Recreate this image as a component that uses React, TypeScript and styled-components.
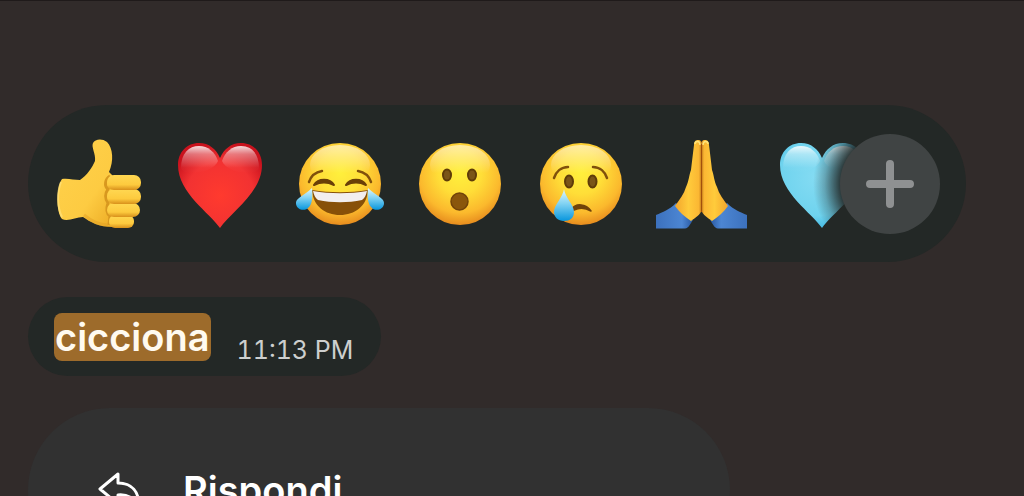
import React from "react";
import styled, { createGlobalStyle } from "styled-components";

const GlobalStyle = createGlobalStyle`
  *, *::before, *::after { box-sizing: border-box; }
  body {
    margin: 0;
    background: #312b2a;
    color: #fff;
    font-family: Inter, "Liberation Sans", sans-serif;
  }
  button { font: inherit; color: inherit; border: 0; padding: 0; background: none; cursor: pointer; }
`;

const Screen = styled.main`
  display: flex;
  flex-direction: column;
  align-items: flex-start;
  height: 100vh;
  overflow: hidden;
  padding: 104px 58px 0 28px;
  border-top: 1px solid #1f1a1a;
`;

const ReactionBar = styled.div`
  position: relative;
  flex: none;
  width: 100%;
  padding: 31px 84px 30px 11px;
  border-radius: 80px;
  background: #232826;
`;

const ReactionList = styled.div`
  display: grid;
  grid-template-columns: repeat(7, 1fr);
  justify-items: center;
`;

const ReactionButton = styled.button`
  display: block;
  height: 96px;
  svg { display: block; overflow: visible; }
`;

const AddButton = styled.button`
  position: absolute;
  top: 29px;
  right: 26px;
  display: grid;
  place-items: center;
  width: 100px;
  height: 100px;
  border-radius: 50%;
  background: #404444;
`;

const Bubble = styled.div`
  display: flex;
  flex: none;
  align-items: flex-end;
  gap: 26px;
  margin-top: 35px;
  padding: 16px 28px 15px 26px;
  border-radius: 40px;
  background: #232826;
`;

const Highlight = styled.mark`
  padding: 0 1px;
  border-radius: 8px;
  background: #9d6b2b;
  color: #fffaf0;
  font-size: 38px;
  font-weight: 600;
  line-height: 48px;
`;

const Time = styled.time`
  color: #cdcfce;
  font-size: 25px;
  font-variant-numeric: tabular-nums;
  line-height: 22px;
`;

const Menu = styled.div`
  flex: none;
  width: 100%;
  max-width: 702px;
  margin-top: 32px;
  padding: 48px 0;
  border-radius: 92px;
  background: #313131;
`;

const MenuItem = styled.button`
  display: flex;
  align-items: center;
  gap: 41px;
  width: 100%;
  padding: 10px 70px;
  font-size: 38px;
  font-weight: 600;
  line-height: 48px;
  text-align: left;
`;

const Defs = () => (
  <svg width="0" height="0" style={{ position: "absolute" }} aria-hidden="true">
    <defs>
      <radialGradient id="face" cx="50%" cy="36%" r="66%">
        <stop offset="0" stopColor="#fff03c" />
        <stop offset=".4" stopColor="#ffde38" />
        <stop offset=".75" stopColor="#fbb92d" />
        <stop offset="1" stopColor="#e4861c" />
      </radialGradient>
      <linearGradient id="shine" x1="0" y1="0" x2="0" y2="1">
        <stop offset="0" stopColor="#fff" stopOpacity=".55" />
        <stop offset=".7" stopColor="#fff" stopOpacity="0" />
      </linearGradient>
      <linearGradient id="skin" x1="0" y1="0" x2="1" y2="1">
        <stop offset="0" stopColor="#ffd24c" />
        <stop offset=".6" stopColor="#fdcb42" />
        <stop offset="1" stopColor="#e9a51f" />
      </linearGradient>
      <linearGradient id="finger" x1="0" y1="0" x2="0" y2="1">
        <stop offset="0" stopColor="#ffd852" />
        <stop offset=".65" stopColor="#fdca3e" />
        <stop offset="1" stopColor="#d8901b" />
      </linearGradient>
      <radialGradient id="red" cx="50%" cy="62%" r="62%">
        <stop offset="0" stopColor="#ff3a2e" />
        <stop offset=".65" stopColor="#f23232" />
        <stop offset="1" stopColor="#c9121d" />
      </radialGradient>
      <radialGradient id="blue" cx="45%" cy="40%" r="65%">
        <stop offset="0" stopColor="#85dcf3" />
        <stop offset=".7" stopColor="#6fd3ee" />
        <stop offset="1" stopColor="#39b4e0" />
      </radialGradient>
      <linearGradient id="gloss" x1="0" y1="0" x2="0" y2="1">
        <stop offset="0" stopColor="#fff" stopOpacity=".85" />
        <stop offset=".3" stopColor="#fff" stopOpacity=".4" />
        <stop offset=".8" stopColor="#fff" stopOpacity=".03" />
        <stop offset="1" stopColor="#fff" stopOpacity="0" />
      </linearGradient>
      <linearGradient id="tear" x1="0" y1="0" x2="0" y2="1">
        <stop offset="0" stopColor="#e3f8fd" />
        <stop offset=".45" stopColor="#83d3f3" />
        <stop offset="1" stopColor="#0796dd" />
      </linearGradient>
      <linearGradient id="palm" x1="0" y1="0" x2="1" y2="0">
        <stop offset="0" stopColor="#f3a52c" />
        <stop offset=".5" stopColor="#ffcb3b" />
        <stop offset=".88" stopColor="#fbb733" />
        <stop offset="1" stopColor="#c47a18" />
      </linearGradient>
      <linearGradient id="sleeve" x1="0" y1="0" x2="1" y2="0">
        <stop offset="0" stopColor="#3c71bd" />
        <stop offset=".7" stopColor="#4c86d3" />
        <stop offset="1" stopColor="#2857a0" />
      </linearGradient>
      <radialGradient id="fade" gradientUnits="userSpaceOnUse" cx="116" cy="48" r="80">
        <stop offset=".63" stopColor="#222" />
        <stop offset=".72" stopColor="#666" />
        <stop offset=".82" stopColor="#b5b5b5" />
        <stop offset=".96" stopColor="#fff" />
      </radialGradient>
      <mask id="fadeMask" maskUnits="userSpaceOnUse" x="0" y="0" width="96" height="96">
        <rect width="96" height="96" fill="url(#fade)" />
      </mask>
    </defs>
  </svg>
);

const Emoji = ({ children }: { children: React.ReactNode }) => (
  <svg width="96" height="96" viewBox="0 0 96 96" fill="none" aria-hidden="true">
    {children}
  </svg>
);

const Face = () => (
  <>
    <circle cx="48" cy="48" r="41" fill="url(#face)" />
    <ellipse cx="48" cy="29" rx="30" ry="20" fill="url(#shine)" />
  </>
);

const ThumbsUp = () => (
  <Emoji>
    <path
      d="M11 43C17 42 23 44 29 44C36 39 41 32 44 25C45 18 40 11 42 7C44 3 51 2 56 6C62 12 63 25 58 36L62 40L70 50V86L62 91C48 91 39 86 32 81C25 81 17 86 11 83C5 76 5 51 11 43Z"
      fill="url(#skin)"
    />
    <path d="M10 46C6 56 6 71 11 81" stroke="#ffe27d" strokeWidth="2" opacity=".7" />
    <path d="M33 79C40 85 48 89 57 89" stroke="#e2a023" strokeWidth="3" opacity=".5" />
    <path d="M59 40C54 43 53 50 57 53C53 59 55 64 57 67C55 73 56 78 59 80L58 89" stroke="#d8981f" strokeWidth="3" />
    <rect x="58" y="79" width="25" height="13" rx="6" fill="url(#finger)" />
    <rect x="56" y="67" width="33" height="14" rx="7" fill="url(#finger)" />
    <rect x="56" y="53" width="34" height="15" rx="7" fill="url(#finger)" />
    <rect x="56" y="39" width="34" height="15" rx="7" fill="url(#finger)" />
  </Emoji>
);

const HEART =
  "M48 92C38 77 6 57 6 29C6 16 15 7 27 7C37 7 44 13 48 22C52 13 59 7 69 7C81 7 90 16 90 29C90 57 58 77 48 92Z";

const Heart = ({ fill }: { fill: string }) => (
  <>
    <path d={HEART} fill={`url(#${fill})`} />
    <path d="M9 32C9 17 17 10 27 10C36 10 43 16 46 25C42 36 12 42 9 32Z" fill="url(#gloss)" />
    <path d="M50 25C53 16 60 10 69 10C79 10 87 17 87 32C84 42 54 36 50 25Z" fill="url(#gloss)" />
  </>
);

const RedHeart = () => (
  <Emoji>
    <Heart fill="red" />
  </Emoji>
);

const BlueHeart = () => (
  <Emoji>
    <g mask="url(#fadeMask)">
      <Heart fill="blue" />
    </g>
  </Emoji>
);

const Laugh = () => (
  <Emoji>
    <Face />
    <path d="M17 46C19 40 24 36 30 35M66 35C72 36 77 40 79 46" stroke="#80500c" strokeWidth="2.5" strokeLinecap="round" />
    <path d="M22 49C26 42 38 42 42 49C36 46 28 46 22 49ZM54 49C58 42 70 42 74 49C68 46 60 46 54 49Z" fill="#6a3f08" stroke="#6a3f08" strokeWidth="2" strokeLinejoin="round" />
    <path d="M20 54C38 57 58 57 76 54C75 70 63 79 48 79C33 79 21 70 20 54Z" fill="#875008" />
    <path d="M21 55C38 58 58 58 75 55C74 59 73 62 70 64C56 67 40 67 26 64C23 62 22 59 21 55Z" fill="#f2eeee" />
    <path d="M20 52C21 61 20 68 17 71C13 76 5 74 4 68C3 62 12 60 20 52Z" fill="url(#tear)" />
    <path d="M76 52C75 61 76 68 79 71C83 76 91 74 92 68C93 62 84 60 76 52Z" fill="url(#tear)" />
  </Emoji>
);

const Wow = () => (
  <Emoji>
    <Face />
    <ellipse cx="35" cy="39" rx="4" ry="5.5" fill="#7a5518" stroke="#5f3c09" strokeWidth="2" />
    <ellipse cx="60" cy="39" rx="4" ry="5.5" fill="#7a5518" stroke="#5f3c09" strokeWidth="2" />
    <circle cx="47.5" cy="65.5" r="8.5" fill="#8a560c" stroke="#71430a" strokeWidth="1.5" />
  </Emoji>
);

const Cry = () => (
  <Emoji>
    <Face />
    <path d="M21 42C23 36 28 31 35 31M60 31C67 31 72 36 74 42" stroke="#80500c" strokeWidth="2.5" strokeLinecap="round" />
    <ellipse cx="36" cy="45.5" rx="4" ry="6" fill="#7a5518" stroke="#5f3c09" strokeWidth="2" />
    <ellipse cx="59.5" cy="45.5" rx="4" ry="6" fill="#7a5518" stroke="#5f3c09" strokeWidth="2" />
    <path d="M38 74C42 67 53 67 58 75C53 72 47 71 41 74Z" fill="#71430a" stroke="#71430a" strokeWidth="1.5" strokeLinejoin="round" />
    <path d="M31 53C32 61 41 69 41 76C41 82 37 85 31 85C25 85 21 81 21 76C21 69 30 61 31 53Z" fill="url(#tear)" />
  </Emoji>
);

const PrayerHalf = () => (
  <>
    <path d="M3 79C10 76 16 74 23 67L40 84C37 88 36 92 32 92.5H3Z" fill="url(#sleeve)" />
    <path
      d="M41 9C41 5 43 4 45 4C48 4 49 6 49 9V74C47 79 42 82 38 85C32 81 26 76 22 70C27 63 31 58 33 51C36 45 36 39 38 34C39 25 40 17 41 9Z"
      fill="url(#palm)"
    />
    <path d="M42 8C42 5 47 4 47 9" stroke="#ffe47a" strokeWidth="1.5" />
  </>
);

const Pray = () => (
  <Emoji>
    <PrayerHalf />
    <g transform="translate(97 0) scale(-1 1)">
      <PrayerHalf />
    </g>
    <path d="M48.5 8V76" stroke="#a1500c" strokeWidth="1.2" />
  </Emoji>
);

const reactions = [
  { label: "Mi piace", Icon: ThumbsUp },
  { label: "Cuore", Icon: RedHeart },
  { label: "Risata", Icon: Laugh },
  { label: "Stupore", Icon: Wow },
  { label: "Tristezza", Icon: Cry },
  { label: "Preghiera", Icon: Pray },
  { label: "Cuore azzurro", Icon: BlueHeart },
];

export default function App() {
  return (
    <>
      <GlobalStyle />
      <Defs />
      <Screen>
        <ReactionBar>
          <ReactionList>
            {reactions.map(({ label, Icon }) => (
              <ReactionButton key={label} type="button" aria-label={label}>
                <Icon />
              </ReactionButton>
            ))}
          </ReactionList>
          <AddButton type="button" aria-label="Altre reazioni">
            <svg width="48" height="48" viewBox="0 0 48 48" fill="none" stroke="#8f9192" strokeWidth="8" strokeLinecap="round" aria-hidden="true">
              <path d="M24 4V44M4 24H44" />
            </svg>
          </AddButton>
        </ReactionBar>
        <Bubble>
          <Highlight>cicciona</Highlight>
          <Time>11:13 PM</Time>
        </Bubble>
        <Menu>
          <MenuItem type="button">
            <svg width="44" height="38" viewBox="0 0 44 38" fill="none" stroke="#fff" strokeWidth="3" strokeLinejoin="round" aria-hidden="true">
              <path d="M20 3L2 18L20 33V24C30 23 36 27 41 35C41 21 34 12 20 12Z" />
            </svg>
            Rispondi
          </MenuItem>
        </Menu>
      </Screen>
    </>
  );
}
